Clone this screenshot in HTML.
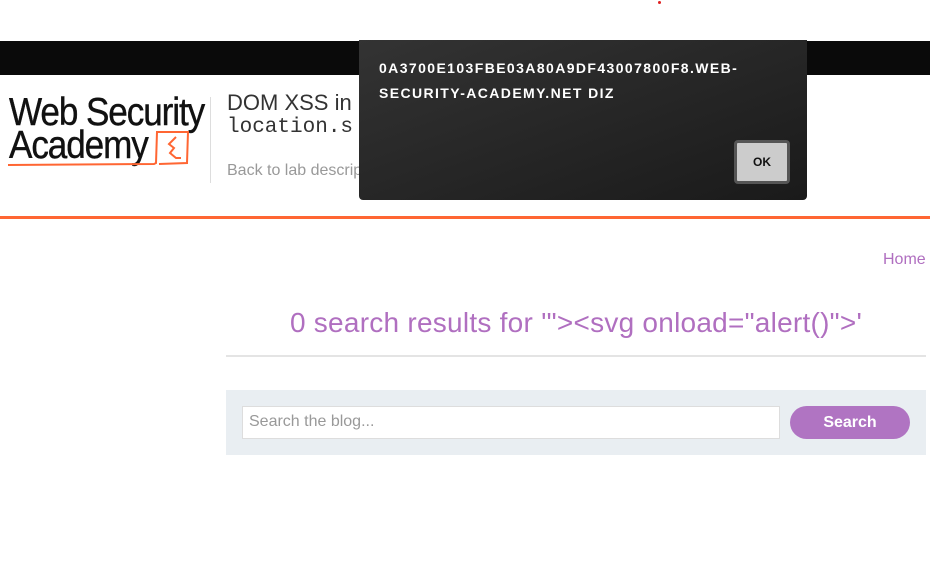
<!DOCTYPE html>
<html><head><style>
*{margin:0;padding:0;box-sizing:border-box}
body{width:930px;height:574px;background:#fff;position:relative;overflow:hidden;font-family:"Liberation Sans",Arial,sans-serif}
.a{position:absolute}
</style></head><body>
<div class="a" style="left:658px;top:1px;width:3px;height:3px;background:#e02020;border-radius:50%"></div>
<div class="a" style="left:0;top:41px;width:930px;height:34px;background:#0a0a0a"></div>
<div class="a" style="left:9px;top:93px;font-size:39px;letter-spacing:-1.2px;color:#111;line-height:39px;transform:scaleX(0.9);transform-origin:left top;white-space:nowrap;-webkit-text-stroke:0.4px #111">Web Security</div>
<div class="a" style="left:9px;top:126px;font-size:39px;letter-spacing:-1.2px;color:#111;line-height:39px;transform:scaleX(0.9);transform-origin:left top;-webkit-text-stroke:0.4px #111">Academy</div>
<svg class="a" style="left:6px;top:130px" width="185" height="40"><path d="M2 35 L148 34 L150 33 L151 2 L182 2 L181 33 L153 34" fill="none" stroke="#ff6633" stroke-width="2"/><path d="M170 7 L163 14 L168 18 L164 23 L170 28 L175 28" fill="none" stroke="#ff6633" stroke-width="2"/></svg>
<div class="a" style="left:210px;top:97px;width:1px;height:86px;background:#ddd"></div>
<div class="a" style="left:227px;top:90px;font-size:22px;color:#333">DOM XSS in</div>
<div class="a" style="left:227px;top:116px;font-size:21px;color:#333;font-family:'Liberation Mono',monospace">location.s</div>
<div class="a" style="left:227px;top:162px;font-size:16px;color:#999">Back to lab descrip</div>
<div class="a" style="left:0;top:216px;width:930px;height:3px;background:#ff6633"></div>
<div class="a" style="left:883px;top:251px;font-size:16px;color:#b06fc0">Home</div>
<div class="a" style="left:226px;top:307px;width:700px;text-align:center;font-size:28px;letter-spacing:0.25px;color:#b06fc0">0 search results for '"&gt;&lt;svg onload="alert()"&gt;'</div>
<div class="a" style="left:226px;top:355px;width:700px;height:2px;background:#e4e4e4"></div>
<div class="a" style="left:226px;top:390px;width:700px;height:65px;background:#e9eef2"></div>
<div class="a" style="left:242px;top:406px;width:538px;height:33px;background:#fff;border:1px solid #ddd;font-size:16px;color:#999;padding:6px 6px">Search the blog...</div>
<div class="a" style="left:790px;top:406px;width:120px;height:33px;background:#b074c2;border-radius:17px;color:#fff;font-weight:bold;font-size:16px;text-align:center;line-height:33px">Search</div>
<div class="a" style="left:359px;top:40px;width:448px;height:160px;background:linear-gradient(160deg,#333,#1a1a1a);border-radius:0 0 4px 4px"></div>
<div class="a" style="left:379px;top:56px;font-size:14px;font-weight:bold;color:#fff;line-height:25px;letter-spacing:1.4px">0A3700E103FBE03A80A9DF43007800F8.WEB-<br>SECURITY-ACADEMY.NET DIZ</div>
<div class="a" style="left:734px;top:140px;width:56px;height:44px;background:#ccc;border:3px solid #555;border-radius:4px;font-size:12px;font-weight:bold;color:#111;text-align:center;line-height:38px">OK</div>
</body></html>
